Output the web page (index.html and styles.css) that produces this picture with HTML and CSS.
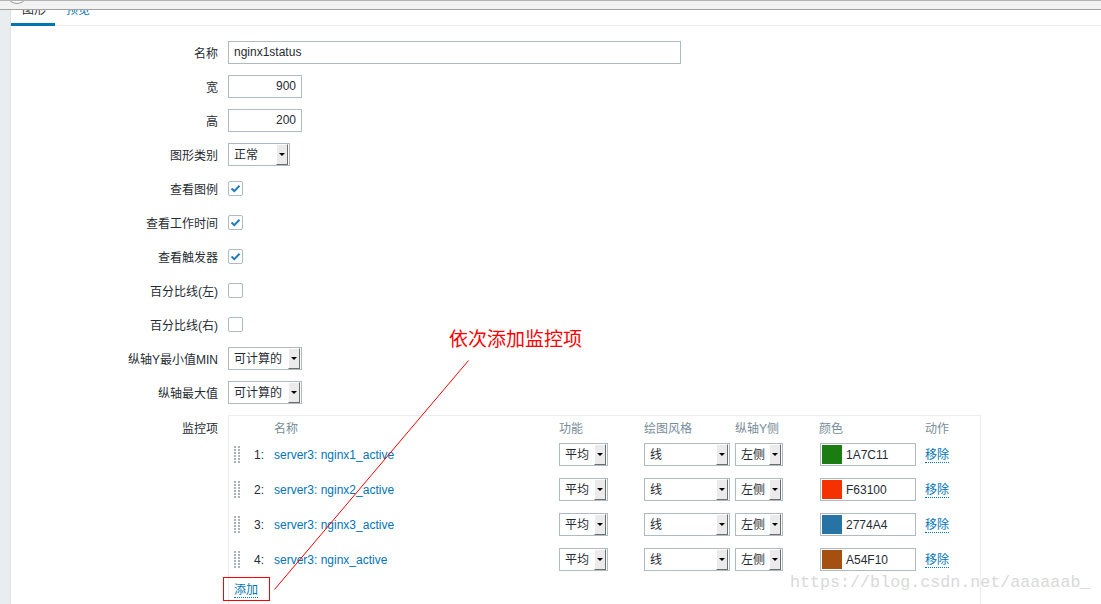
FILE: index.html
```html
<!DOCTYPE html>
<html>
<head>
<meta charset="utf-8">
<link rel="stylesheet" href="styles.css">
</head>
<body>
<div class="topbar"><span class="tb-circle"></span></div>
<div class="page">
  <div class="side"></div>
  <div class="main">
    <div class="tabs">
      <span class="tab active">图形</span>
      <span class="tab">预览</span>
    </div>
    <div class="form">
      <label class="lbl">名称</label>
      <div class="ctl"><div class="inp wide">nginx1status</div></div>

      <label class="lbl">宽</label>
      <div class="ctl"><div class="inp num">900</div></div>

      <label class="lbl">高</label>
      <div class="ctl"><div class="inp num">200</div></div>

      <label class="lbl">图形类别</label>
      <div class="ctl"><div class="sel w62"><span class="sel-t">正常</span><span class="sel-b"></span></div></div>

      <label class="lbl">查看图例</label>
      <div class="ctl"><span class="cb"><svg width="13" height="13" viewBox="0 0 13 13"><path d="M2.5 6.5 L5.3 9.2 L10.5 3.8" fill="none" stroke="#1f7bc1" stroke-width="2"/></svg></span></div>

      <label class="lbl">查看工作时间</label>
      <div class="ctl"><span class="cb"><svg width="13" height="13" viewBox="0 0 13 13"><path d="M2.5 6.5 L5.3 9.2 L10.5 3.8" fill="none" stroke="#1f7bc1" stroke-width="2"/></svg></span></div>

      <label class="lbl">查看触发器</label>
      <div class="ctl"><span class="cb"><svg width="13" height="13" viewBox="0 0 13 13"><path d="M2.5 6.5 L5.3 9.2 L10.5 3.8" fill="none" stroke="#1f7bc1" stroke-width="2"/></svg></span></div>

      <label class="lbl">百分比线(左)</label>
      <div class="ctl"><span class="cb"></span></div>

      <label class="lbl">百分比线(右)</label>
      <div class="ctl"><span class="cb"></span></div>

      <label class="lbl">纵轴Y最小值MIN</label>
      <div class="ctl"><div class="sel w74"><span class="sel-t">可计算的</span><span class="sel-b"></span></div></div>

      <label class="lbl">纵轴最大值</label>
      <div class="ctl"><div class="sel w74"><span class="sel-t">可计算的</span><span class="sel-b"></span></div></div>

      <label class="lbl top">监控项</label>
      <div class="ctl top">
        <div class="itable">
          <div class="igrid head">
            <span></span><span></span>
            <span>名称</span><span>功能</span><span>绘图风格</span><span>纵轴Y侧</span><span>颜色</span><span>动作</span>
          </div>
          <div class="igrid rows">
            <span class="drag"><svg width="6" height="17" viewBox="0 0 6 17"><g fill="#a8b2b8"><rect x="0" y="0" width="2" height="2"/><rect x="4" y="0" width="2" height="2"/><rect x="0" y="3" width="2" height="2"/><rect x="4" y="3" width="2" height="2"/><rect x="0" y="6" width="2" height="2"/><rect x="4" y="6" width="2" height="2"/><rect x="0" y="9" width="2" height="2"/><rect x="4" y="9" width="2" height="2"/><rect x="0" y="12" width="2" height="2"/><rect x="4" y="12" width="2" height="2"/><rect x="0" y="15" width="2" height="2"/><rect x="4" y="15" width="2" height="2"/></g></svg></span><span class="no">1:</span><a class="lnk">server3: nginx1_active</a>
            <div class="sel w49"><span class="sel-t">平均</span><span class="sel-b"></span></div>
            <div class="sel w86"><span class="sel-t">线</span><span class="sel-b"></span></div>
            <div class="sel w48"><span class="sel-t">左侧</span><span class="sel-b"></span></div>
            <div class="color"><span class="sw" style="background:#1A7C11"></span><span class="ctext">1A7C11</span></div>
            <a class="act">移除</a>

            <span class="drag"><svg width="6" height="17" viewBox="0 0 6 17"><g fill="#a8b2b8"><rect x="0" y="0" width="2" height="2"/><rect x="4" y="0" width="2" height="2"/><rect x="0" y="3" width="2" height="2"/><rect x="4" y="3" width="2" height="2"/><rect x="0" y="6" width="2" height="2"/><rect x="4" y="6" width="2" height="2"/><rect x="0" y="9" width="2" height="2"/><rect x="4" y="9" width="2" height="2"/><rect x="0" y="12" width="2" height="2"/><rect x="4" y="12" width="2" height="2"/><rect x="0" y="15" width="2" height="2"/><rect x="4" y="15" width="2" height="2"/></g></svg></span><span class="no">2:</span><a class="lnk">server3: nginx2_active</a>
            <div class="sel w49"><span class="sel-t">平均</span><span class="sel-b"></span></div>
            <div class="sel w86"><span class="sel-t">线</span><span class="sel-b"></span></div>
            <div class="sel w48"><span class="sel-t">左侧</span><span class="sel-b"></span></div>
            <div class="color"><span class="sw" style="background:#F63100"></span><span class="ctext">F63100</span></div>
            <a class="act">移除</a>

            <span class="drag"><svg width="6" height="17" viewBox="0 0 6 17"><g fill="#a8b2b8"><rect x="0" y="0" width="2" height="2"/><rect x="4" y="0" width="2" height="2"/><rect x="0" y="3" width="2" height="2"/><rect x="4" y="3" width="2" height="2"/><rect x="0" y="6" width="2" height="2"/><rect x="4" y="6" width="2" height="2"/><rect x="0" y="9" width="2" height="2"/><rect x="4" y="9" width="2" height="2"/><rect x="0" y="12" width="2" height="2"/><rect x="4" y="12" width="2" height="2"/><rect x="0" y="15" width="2" height="2"/><rect x="4" y="15" width="2" height="2"/></g></svg></span><span class="no">3:</span><a class="lnk">server3: nginx3_active</a>
            <div class="sel w49"><span class="sel-t">平均</span><span class="sel-b"></span></div>
            <div class="sel w86"><span class="sel-t">线</span><span class="sel-b"></span></div>
            <div class="sel w48"><span class="sel-t">左侧</span><span class="sel-b"></span></div>
            <div class="color"><span class="sw" style="background:#2774A4"></span><span class="ctext">2774A4</span></div>
            <a class="act">移除</a>

            <span class="drag"><svg width="6" height="17" viewBox="0 0 6 17"><g fill="#a8b2b8"><rect x="0" y="0" width="2" height="2"/><rect x="4" y="0" width="2" height="2"/><rect x="0" y="3" width="2" height="2"/><rect x="4" y="3" width="2" height="2"/><rect x="0" y="6" width="2" height="2"/><rect x="4" y="6" width="2" height="2"/><rect x="0" y="9" width="2" height="2"/><rect x="4" y="9" width="2" height="2"/><rect x="0" y="12" width="2" height="2"/><rect x="4" y="12" width="2" height="2"/><rect x="0" y="15" width="2" height="2"/><rect x="4" y="15" width="2" height="2"/></g></svg></span><span class="no">4:</span><a class="lnk">server3: nginx_active</a>
            <div class="sel w49"><span class="sel-t">平均</span><span class="sel-b"></span></div>
            <div class="sel w86"><span class="sel-t">线</span><span class="sel-b"></span></div>
            <div class="sel w48"><span class="sel-t">左侧</span><span class="sel-b"></span></div>
            <div class="color"><span class="sw" style="background:#A54F10"></span><span class="ctext">A54F10</span></div>
            <a class="act">移除</a>
          </div>
          <div class="addrow"><a class="act">添加</a></div>
        </div>
      </div>
    </div>
  </div>
</div>

<div class="note">依次添加监控项</div>
<svg class="arrow" width="1101" height="604" viewBox="0 0 1101 604">
  <line x1="468.5" y1="360.5" x2="274.5" y2="589.5" stroke="#ff0000" stroke-width="1"/>
</svg>
<div class="redbox"></div>
<div class="watermark">https://blog.csdn.net/aaaaaab_</div>
</body>
</html>
```

FILE: styles.css
```css
html, body {
  margin: 0;
  padding: 0;
  overflow: hidden;
  background: #ffffff;
}
body {
  position: relative;
  width: 1101px;
  height: 604px;
  font-family: "Liberation Sans", "Noto Sans CJK SC", sans-serif;
  font-size: 12px;
  color: #1f2c33;
}
.topbar {
  position: relative;
  height: 8px;
  background: #f2f2f2;
  border-top: 1px solid #b4b4b4;
  border-bottom: 1px solid #a2a2a2;
  overflow: hidden;
}
.tb-circle {
  position: absolute;
  left: 6px;
  top: -19px;
  width: 20px;
  height: 20px;
  border: 1px solid #9c9c9c;
  border-radius: 50%;
  background: #f8f8f8;
}
.page {
  display: flex;
  height: 594px;
}
.side {
  width: 10px;
  background: #e9edf0;
  border-right: 1px solid #dde2e5;
  flex: none;
}
.main {
  flex: 1;
  min-width: 0;
}
.tabs {
  display: flex;
  height: 16px;
  overflow: hidden;
  box-shadow: inset 0 -1px 0 #ebeef0;
}
.tab {
  box-sizing: border-box;
  height: 16px;
  display: flex;
  align-items: flex-end;
  line-height: 14px;
  padding: 0 9px 6px 11px;
  color: #0275b8;
  border-bottom: 3px solid transparent;
}
.tab.active {
  color: #1f2c33;
  border-bottom-color: #0275b8;
}
.form {
  display: grid;
  grid-template-columns: 207px 1fr;
  column-gap: 10px;
  row-gap: 11px;
  grid-auto-rows: minmax(23px, auto);
  align-items: center;
  padding-top: 15px;
}
.lbl {
  text-align: right;
  line-height: 14px;
  padding-top: 2px;
  white-space: nowrap;
}
.lbl.top {
  align-self: start;
  padding-top: 7px;
}
.ctl {
  display: flex;
  align-items: center;
}
.ctl.top {
  align-self: start;
}
.inp {
  box-sizing: border-box;
  height: 23px;
  border: 1px solid #acbbc4;
  line-height: 21px;
  padding: 0 5px;
  background: #fff;
}
.inp.wide { width: 453px; }
.inp.num { width: 74px; text-align: right; }
.sel {
  box-sizing: border-box;
  height: 23px;
  border: 1px solid #acbbc4;
  display: flex;
  background: #fff;
}
.sel-t {
  flex: 1;
  line-height: 19px;
  padding: 2px 0 0 5px;
  white-space: nowrap;
  overflow: hidden;
}
.sel-b {
  box-sizing: border-box;
  width: 12px;
  margin: 0 1px 0 0;
  background: #ebebeb;
  border-left: 1px solid #ffffff;
  border-top: 1px solid #ffffff;
  border-right: 1px solid #6e6e6e;
  border-bottom: 1px solid #6e6e6e;
  display: flex;
  align-items: center;
  justify-content: center;
}
.sel-b::after {
  content: "";
  border-left: 3px solid transparent;
  border-right: 3px solid transparent;
  border-top: 3px solid #000;
}
.w62 { width: 62px; }
.w74 { width: 74px; }
.w49 { width: 49px; }
.w86 { width: 86px; }
.w48 { width: 48px; }
.cb {
  box-sizing: border-box;
  width: 15px;
  height: 15px;
  border: 1px solid #acbbc4;
  border-radius: 2px;
  display: flex;
  align-items: center;
  justify-content: center;
  background: #fff;
}
.itable {
  box-sizing: border-box;
  width: 753px;
  border: 1px solid #ebeef0;
  border-bottom: none;
  padding: 5px 5px 12px 5px;
}
.igrid {
  display: grid;
  grid-template-columns: 20px 20px 285px 85px 91px 84px 106px 1fr;
  align-items: center;
}
.head {
  color: #768d99;
  line-height: 14px;
  padding-top: 1px;
  margin-bottom: 7px;
}
.rows {
  row-gap: 12px;
  grid-auto-rows: 23px;
}
.drag {
  display: flex;
  height: 17px;
}
.no {
  line-height: 14px;
  padding-top: 1px;
}
.lnk {
  color: #0275b8;
  line-height: 14px;
  padding-top: 1px;
  white-space: nowrap;
}
.color {
  box-sizing: border-box;
  width: 96px;
  height: 23px;
  margin-left: 1px;
  border: 1px solid #acbbc4;
  display: flex;
  align-items: center;
  gap: 4px;
  padding-left: 1px;
}
.ctext {
  padding-top: 1px;
}
.sw {
  width: 20px;
  height: 19px;
}
.act {
  justify-self: start;
  align-self: center;
  color: #0275b8;
  line-height: 13px;
  margin-top: 3px;
  border-bottom: 1px dotted #0275b8;
}
.addrow {
  margin-top: 10px;
  display: flex;
}
.note {
  position: absolute;
  left: 449px;
  top: 326px;
  font-family: "Noto Sans CJK SC", sans-serif;
  font-size: 19px;
  line-height: 24px;
  color: #ff0000;
  white-space: nowrap;
}
.arrow {
  position: absolute;
  left: 0;
  top: 0;
  pointer-events: none;
}
.redbox {
  position: absolute;
  left: 223px;
  top: 577px;
  width: 45px;
  height: 22px;
  border: 1px solid #ff0000;
}
.watermark {
  position: absolute;
  left: 790px;
  top: 572px;
  font-family: "Liberation Mono", monospace;
  font-size: 16.7px;
  line-height: 22px;
  color: #d9d9d9;
  white-space: nowrap;
}
```
